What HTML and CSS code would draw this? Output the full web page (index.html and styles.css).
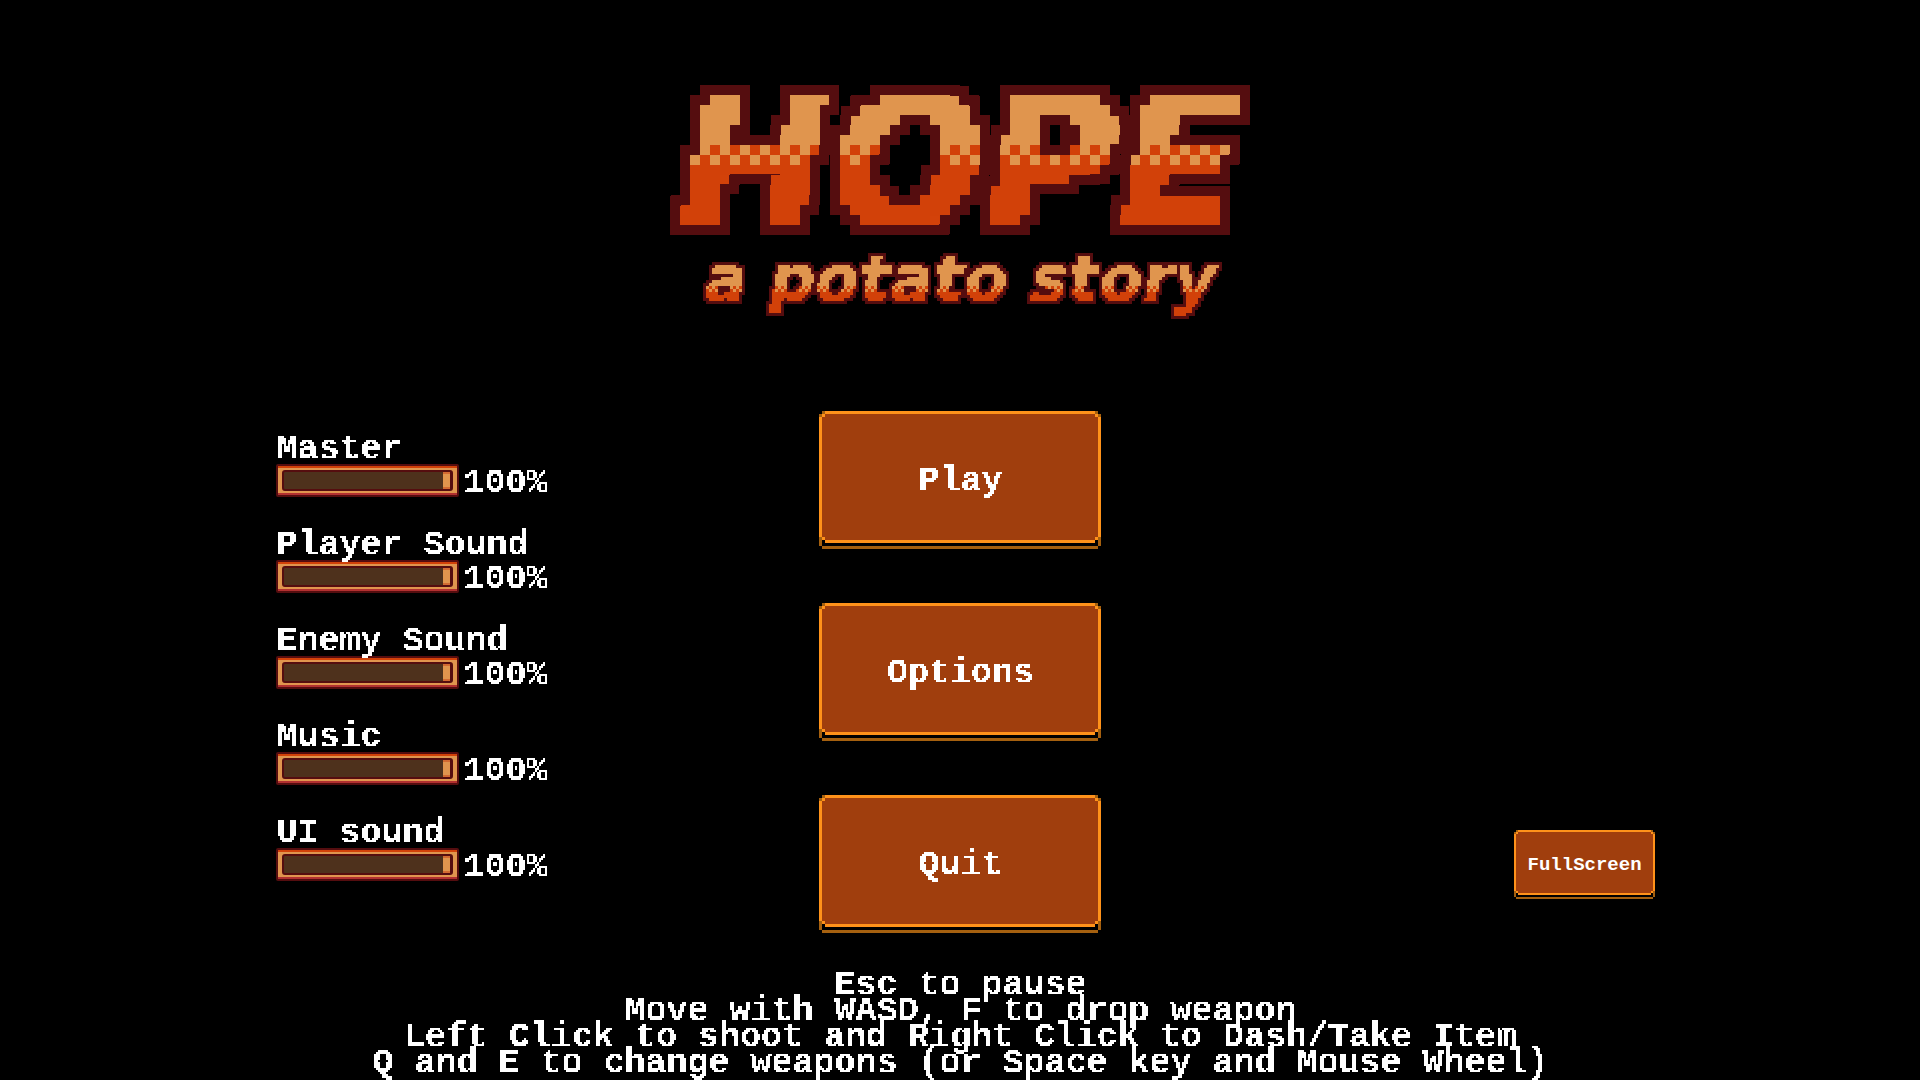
FILE: index.html
```html
<!DOCTYPE html>
<html lang="en">
<head>
    <meta charset="UTF-8">
    <meta name="viewport" content="width=device-width, initial-scale=1.0">
    <title>HOPE - a potato story</title>
    <link rel="stylesheet" href="styles.css">
</head>
<body>
    <header>
        <h1>
            <svg class="logo" width="640" height="280" viewBox="0 -40 640 280">
                <defs>
                    <!-- Two-tone fill with a dithered band in the middle -->
                    <pattern id="big-fill" width="20" height="240" patternUnits="userSpaceOnUse">
                        <rect width="20" height="70" fill="#e0954e"/>
                        <rect y="70" width="20" height="170" fill="#d24109"/>
                        <rect x="10" y="60" width="10" height="10" fill="#d24109"/>
                        <rect x="10" y="70" width="10" height="10" fill="#e0954e"/>
                    </pattern>
                    <pattern id="small-fill" width="6" height="240" patternUnits="userSpaceOnUse">
                        <rect width="6" height="204" fill="#e0954e"/>
                        <rect y="204" width="6" height="36" fill="#d24109"/>
                        <rect x="3" y="201" width="3" height="3" fill="#d24109"/>
                        <rect x="3" y="204" width="3" height="3" fill="#e0954e"/>
                    </pattern>

                    <!-- Samples one point per cell, grows it to the full cell, adds the outline -->
                    <filter id="pixel-big" filterUnits="userSpaceOnUse" x="0" y="0" width="640" height="240" color-interpolation-filters="sRGB">
                        <feComponentTransfer in="SourceGraphic" result="hard">
                            <feFuncA type="discrete" tableValues="0 1"/>
                        </feComponentTransfer>
                        <feFlood x="4" y="4" width="2" height="2" flood-color="#000"/>
                        <feComposite in2="SourceGraphic" operator="over" x="0" y="0" width="10" height="10" result="seed"/>
                        <feTile in="seed" result="grid"/>
                        <feComposite in="hard" in2="grid" operator="in"/>
                        <feMorphology operator="dilate" radius="4" result="cells"/>
                        <feMorphology in="cells" operator="dilate" radius="10" result="grown"/>
                        <feFlood flood-color="#550d0f"/>
                        <feComposite in2="grown" operator="in" result="outline"/>
                        <feMerge>
                            <feMergeNode in="outline"/>
                            <feMergeNode in="cells"/>
                        </feMerge>
                    </filter>
                    <filter id="pixel-small" filterUnits="userSpaceOnUse" x="0" y="0" width="640" height="240" color-interpolation-filters="sRGB">
                        <feComponentTransfer in="SourceGraphic" result="hard">
                            <feFuncA type="discrete" tableValues="0 1"/>
                        </feComponentTransfer>
                        <feFlood x="1" y="1" width="1" height="1" flood-color="#000"/>
                        <feComposite in2="SourceGraphic" operator="over" x="0" y="0" width="3" height="3" result="seed"/>
                        <feTile in="seed" result="grid"/>
                        <feComposite in="hard" in2="grid" operator="in"/>
                        <feMorphology operator="dilate" radius="1" result="cells"/>
                        <feMorphology in="cells" operator="dilate" radius="3" result="grown"/>
                        <feFlood flood-color="#550d0f"/>
                        <feComposite in2="grown" operator="in" result="outline"/>
                        <feMerge>
                            <feMergeNode in="outline"/>
                            <feMergeNode in="cells"/>
                        </feMerge>
                    </filter>

                    <!-- Smaller cells for the menu text, grown right and down instead of dilated -->
                    <filter id="pixel-text" x="-5%" y="-40%" width="110%" height="180%" color-interpolation-filters="sRGB">
                        <feComponentTransfer in="SourceGraphic" result="hard">
                            <feFuncA type="discrete" tableValues="0 1"/>
                        </feComponentTransfer>
                        <feFlood x="0" y="0" width="1" height="1" flood-color="#000" result="dot"/>
                        <feComposite in="dot" operator="over" in2="dot" x="0" y="0" width="2" height="2" result="seed"/>
                        <feTile in="seed" result="grid"/>
                        <feComposite in="hard" in2="grid" operator="in" result="points"/>
                        <feOffset in="points" dx="1" dy="0" result="right"/>
                        <feMerge result="pairs">
                            <feMergeNode in="points"/>
                            <feMergeNode in="right"/>
                        </feMerge>
                        <feOffset in="pairs" dx="0" dy="1" result="down"/>
                        <feMerge>
                            <feMergeNode in="pairs"/>
                            <feMergeNode in="down"/>
                        </feMerge>
                    </filter>
                </defs>
                <g filter="url(#pixel-big)">
                    <text class="logo-title" x="320" y="141">HOPE</text>
                </g>
                <g filter="url(#pixel-small)">
                    <text class="logo-subtitle" x="320" y="216">a potato story</text>
                </g>
            </svg>
        </h1>
    </header>

    <main class="menu">
        <section class="settings">
            <div class="setting">
                <label for="master">Master</label>
                <div class="slider-row">
                    <input type="range" id="master" value="100" max="100">
                    <output for="master">100%</output>
                </div>
            </div>
            <div class="setting">
                <label for="player-sound">Player Sound</label>
                <div class="slider-row">
                    <input type="range" id="player-sound" value="100" max="100">
                    <output for="player-sound">100%</output>
                </div>
            </div>
            <div class="setting">
                <label for="enemy-sound">Enemy Sound</label>
                <div class="slider-row">
                    <input type="range" id="enemy-sound" value="100" max="100">
                    <output for="enemy-sound">100%</output>
                </div>
            </div>
            <div class="setting">
                <label for="music">Music</label>
                <div class="slider-row">
                    <input type="range" id="music" value="100" max="100">
                    <output for="music">100%</output>
                </div>
            </div>
            <div class="setting">
                <label for="ui-sound">UI sound</label>
                <div class="slider-row">
                    <input type="range" id="ui-sound" value="100" max="100">
                    <output for="ui-sound">100%</output>
                </div>
            </div>
        </section>

        <nav class="buttons">
            <button type="button"><span>Play</span></button>
            <button type="button"><span>Options</span></button>
            <button type="button"><span>Quit</span></button>
        </nav>

        <button type="button" class="fullscreen" id="fullscreen-btn">FullScreen</button>
    </main>

    <footer class="help">
        <p>Esc to pause</p>
        <p>Move with WASD, F to drop weapon</p>
        <p>Left Click to shoot and Right Click to Dash/Take Item</p>
        <p>Q and E to change weapons (or Space key and Mouse Wheel)</p>
    </footer>

    <script>
        // Show the current value next to each slider
        document.querySelectorAll(".slider-row").forEach((row) => {
            const slider = row.querySelector("input");
            const output = row.querySelector("output");
            slider.addEventListener("input", () => {
                output.innerText = slider.value + "%";
            });
        });

        document.getElementById("fullscreen-btn").addEventListener("click", () => {
            document.documentElement.requestFullscreen();
        });
    </script>
</body>
</html>
```

FILE: styles.css
```css
* {
    box-sizing: border-box;
}

body {
    margin: 0;
    background-color: #000;
    color: #fff;
    font-family: "Liberation Mono", "Courier New", monospace;
    font-size: 35px;
    font-weight: bold;
    line-height: 26px;
}

header {
    padding-top: 45px;
    text-align: center;
}

h1 {
    margin: 0;
}

.logo {
    display: block;
    margin: 0 auto;
}

.logo text {
    font-family: "DejaVu Sans", Verdana, sans-serif;
    font-weight: bold;
    font-style: oblique;
    text-anchor: middle;
}

.logo-title {
    font-size: 182px;
    fill: url(#big-fill);
}

.logo-subtitle {
    font-size: 64px;
    fill: url(#small-fill);
}

.menu {
    display: grid;
    grid-template-columns: 1fr 276px 1fr;
    margin-top: 89px;
    padding: 0 13.8%;
}

.settings {
    display: flex;
    flex-direction: column;
    gap: 31px;
    padding: 18px 0 0 11px;
}

.setting label {
    display: block;
    padding: 4px 0 2px;
}

.setting output {
    padding-top: 4px;
}

.setting label,
.setting output,
.buttons span,
.help p {
    filter: url(#pixel-text);
}

.slider-row {
    display: flex;
    align-items: center;
    gap: 4px;
}

input[type="range"] {
    appearance: none;
    width: 183px;
    height: 33px;
    margin: 0;
    padding: 4px;
    border: 2px solid #550d0f;
    border-radius: 2px;
    background-color: #e0954e;
    box-shadow: inset 0 2px #d24109, inset 0 -2px #b23030;
    cursor: pointer;
}

input[type="range"]::-webkit-slider-runnable-track {
    height: 21px;
    border: 2px solid #550d0f;
    border-radius: 3px;
    background-color: #4e311c;
}

input[type="range"]::-webkit-slider-thumb {
    appearance: none;
    width: 8px;
    height: 17px;
    border-right: 1px solid #550d0f;
    background-color: #e0954e;
    box-shadow: inset 0 2px #d26a32, inset 0 -2px #d26a32;
}

.buttons {
    display: flex;
    flex-direction: column;
    gap: 66px;
}

/* Stepped corners: every shadow is one art pixel further out */
button {
    --px: 3px;
    height: 126px;
    padding: 8px 0 0;
    border: none;
    color: #fff;
    font: inherit;
    cursor: pointer;
    background:
        linear-gradient(#ff921a, #ff921a) left top,
        linear-gradient(#ff921a, #ff921a) right top,
        linear-gradient(#ff921a, #ff921a) left bottom,
        linear-gradient(#ff921a, #ff921a) right bottom;
    background-size: var(--px) var(--px);
    background-repeat: no-repeat;
    background-color: #a03e0d;
    box-shadow:
        0 calc(var(--px) * -2) 0 calc(var(--px) * -1) #ff921a,
        calc(var(--px) * -2) 0 0 calc(var(--px) * -1) #ff921a,
        calc(var(--px) * 2) 0 0 calc(var(--px) * -1) #ff921a,
        0 calc(var(--px) * 2) 0 calc(var(--px) * -1) #ff921a,
        0 calc(var(--px) * -1) 0 0 #a5600f,
        0 calc(var(--px) * 2) 0 0 #000,
        0 calc(var(--px) * 3) 0 0 #a5600f,
        0 var(--px) 0 var(--px) #a5600f;
}

button span {
    display: inline-block;
}

button:hover {
    background-color: #b84a10;
}

.fullscreen {
    --px: 2px;
    align-self: end;
    justify-self: end;
    width: 137px;
    height: 61px;
    margin: 0 2px 31px 0;
    padding: 4px 0 0;
    font-size: 19px;
}

.help {
    margin-top: 48px;
    padding-bottom: 4px;
    text-align: center;
}

.help p {
    margin: 0;
}
```
